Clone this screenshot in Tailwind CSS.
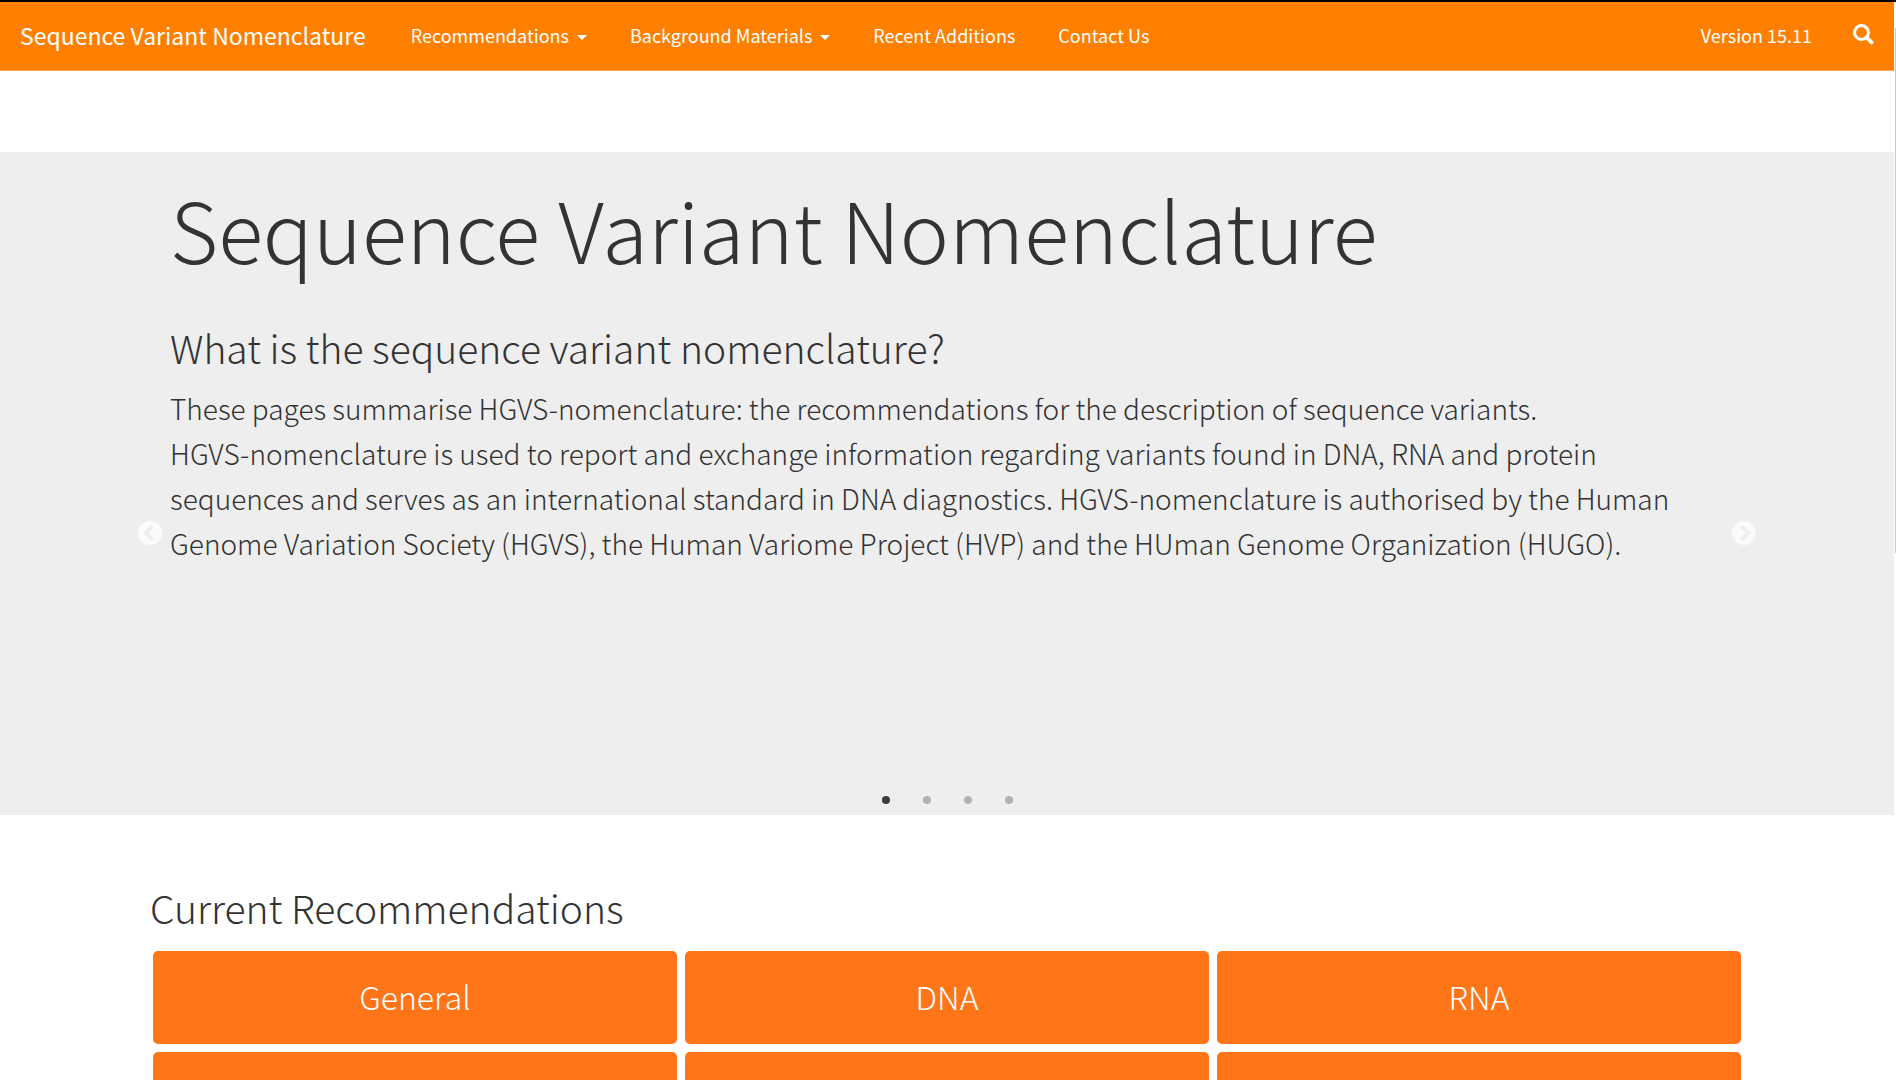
<!DOCTYPE html>
<html lang="en">
<head>
<meta charset="utf-8">
<title>Sequence Variant Nomenclature</title>
<script src="https://cdn.jsdelivr.net/npm/@tailwindcss/browser@4"></script>
</head>
<body class="h-screen overflow-hidden bg-white font-['Noto_Sans_CJK_SC','Noto_Sans',sans-serif] font-light text-[#333333]">
<div class="flex h-full border-t-2 border-black">
  <div class="min-w-0 flex-1 overflow-hidden">
    <header class="flex h-[69px] items-center border-b border-[#ffa54a] bg-[#ff8000] px-5 pb-0.5 font-normal text-white">
      <a href="#" class="text-[23px] leading-[66px]">Sequence Variant Nomenclature</a>
      <nav aria-label="Main" class="ml-[45px] flex items-center gap-[43px] text-[18px] leading-[66px]">
        <button type="button" class="flex items-center gap-2">Recommendations<svg class="mt-1 h-[5px] w-[10px]" viewBox="0 0 10 5" fill="currentColor" aria-hidden="true"><path d="M0 0h10L5 5z"/></svg></button>
        <button type="button" class="flex items-center gap-2">Background Materials<svg class="mt-1 h-[5px] w-[10px]" viewBox="0 0 10 5" fill="currentColor" aria-hidden="true"><path d="M0 0h10L5 5z"/></svg></button>
        <a href="#">Recent Additions</a>
        <a href="#">Contact Us</a>
      </nav>
      <a href="#" class="ml-auto text-[18px] leading-[66px]">Version 15.11</a>
      <button type="button" aria-label="Search" class="mb-0.5 ml-[41px]">
        <svg class="h-[21px] w-[21px]" viewBox="0 0 21 21" fill="none" stroke="currentColor" aria-hidden="true"><circle cx="8.500" cy="8.500" r="6.900" stroke-width="3"/><path d="M13.200 13.200l5.400 5.200" stroke-width="3.800" stroke-linecap="round"/></svg>
      </button>
    </header>

    <section aria-label="Introduction" class="mt-[81px] h-[663px] bg-[#eeeeee]">
      <div class="relative mx-[150px] h-full px-5">
        <h1 class="pt-6 text-[83px] leading-[104px] font-light">Sequence Variant Nomenclature</h1>
        <h2 class="mt-9 text-[39px] leading-[62px] font-light">What is the sequence variant nomenclature?</h2>
        <p class="mt-2 text-[28px] leading-[45px]">These pages summarise HGVS-nomenclature: the recommendations for the description of sequence variants.<br>HGVS-nomenclature is used to report and exchange information regarding variants found in DNA, RNA and protein sequences and serves as an international standard in DNA diagnostics. HGVS-nomenclature is authorised by the Human Genome Variation Society (HGVS), the Human Variome Project (HVP) and the HUman Genome Organization (HUGO).</p>
        <button type="button" aria-label="Previous" class="absolute top-[369px] -left-3">
          <svg class="size-6" viewBox="0 0 24 24" aria-hidden="true"><circle cx="12" cy="12" r="12" fill="#fbfbfb"/><path d="M14.500 5L8 12l6.500 7" fill="none" stroke="#eeeeee" stroke-width="3.800"/></svg>
        </button>
        <button type="button" aria-label="Next" class="absolute top-[369px] -right-3">
          <svg class="size-6" viewBox="0 0 24 24" aria-hidden="true"><circle cx="12" cy="12" r="12" fill="#fbfbfb"/><path d="M9.500 5L16 12l-6.500 7" fill="none" stroke="#eeeeee" stroke-width="3.800"/></svg>
        </button>
        <div class="absolute inset-x-0 bottom-[11px] flex justify-center gap-[33px]">
          <button type="button" aria-label="Slide 1" class="size-2 rounded-full bg-[#3a3a3a]"></button>
          <button type="button" aria-label="Slide 2" class="size-2 rounded-full bg-[#b1b1b1]"></button>
          <button type="button" aria-label="Slide 3" class="size-2 rounded-full bg-[#b1b1b1]"></button>
          <button type="button" aria-label="Slide 4" class="size-2 rounded-full bg-[#b1b1b1]"></button>
        </div>
      </div>
    </section>

    <main class="mx-[150px] pt-16">
      <h2 class="text-[39px] leading-[56px] font-light">Current Recommendations</h2>
      <div class="mt-4 grid grid-cols-3 gap-2 px-[3px] text-[32px] leading-[91px] text-white">
        <a href="#" class="h-[93px] rounded-[5px] bg-[#ff7518] text-center">General</a>
        <a href="#" class="h-[93px] rounded-[5px] bg-[#ff7518] text-center">DNA</a>
        <a href="#" class="h-[93px] rounded-[5px] bg-[#ff7518] text-center">RNA</a>
        <a href="#" aria-label="Protein" class="h-[93px] rounded-[5px] bg-[#ff7518]"></a>
        <a href="#" aria-label="Uncertain" class="h-[93px] rounded-[5px] bg-[#ff7518]"></a>
        <a href="#" aria-label="Checklist" class="h-[93px] rounded-[5px] bg-[#ff7518]"></a>
      </div>
    </main>
  </div>
  <div class="w-[2px] pt-[26px] pl-px" aria-hidden="true"><div class="h-[525px] bg-[#c8c8c8]"></div></div>
</div>
</body>
</html>
